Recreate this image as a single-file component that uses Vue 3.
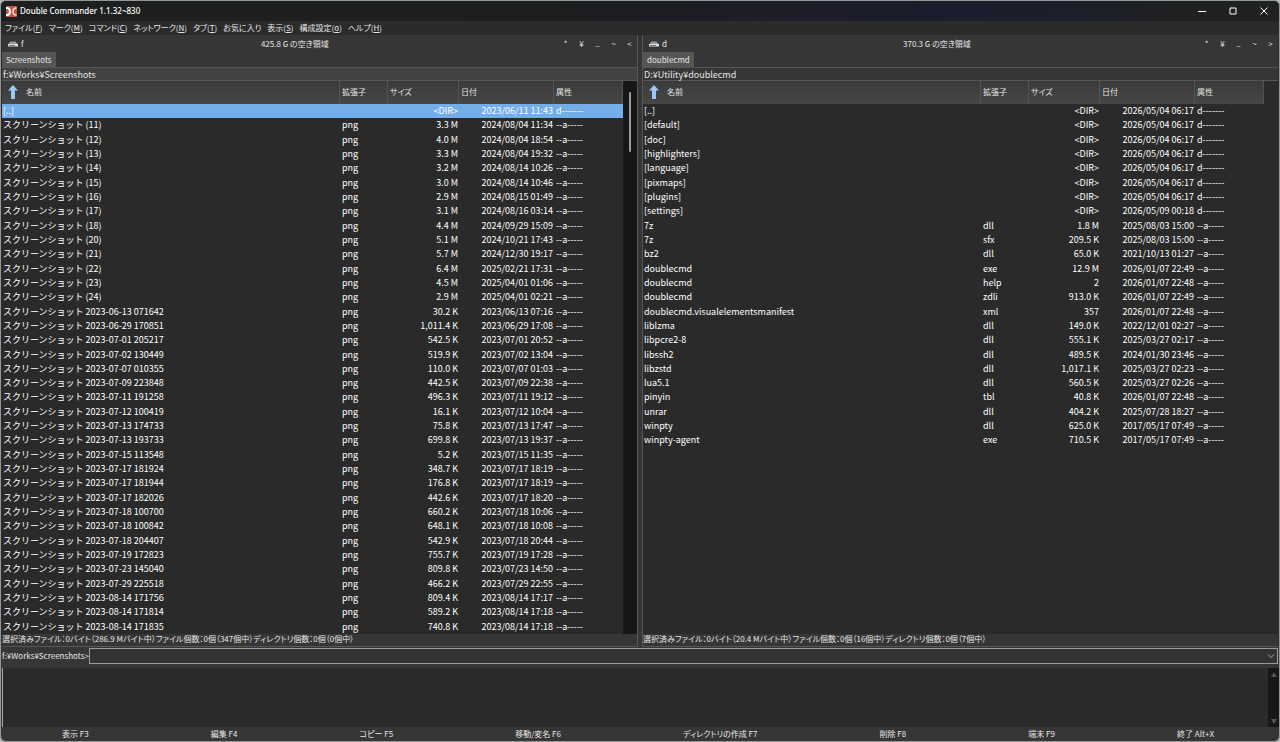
<script setup>
import { ref } from 'vue'

const menus = [
  ['ファイル', 'F'], ['マーク', 'M'], ['コマンド', 'C'], ['ネットワーク', 'N'], ['タブ', 'T'],
  ['お気に入り', ''], ['表示', 'S'], ['構成設定', 'o'], ['ヘルプ', 'H'],
]

const shots = `(11)|3.3 M|2024/08/04 11:34
(12)|4.0 M|2024/08/04 18:54
(13)|3.3 M|2024/08/04 19:32
(14)|3.2 M|2024/08/14 10:26
(15)|3.0 M|2024/08/14 10:46
(16)|2.9 M|2024/08/15 01:49
(17)|3.1 M|2024/08/16 03:14
(18)|4.4 M|2024/09/29 15:09
(20)|5.1 M|2024/10/21 17:43
(21)|5.7 M|2024/12/30 19:17
(22)|6.4 M|2025/02/21 17:31
(23)|4.5 M|2025/04/01 01:06
(24)|2.9 M|2025/04/01 02:21
2023-06-13 071642|30.2 K|2023/06/13 07:16
2023-06-29 170851|1,011.4 K|2023/06/29 17:08
2023-07-01 205217|542.5 K|2023/07/01 20:52
2023-07-02 130449|519.9 K|2023/07/02 13:04
2023-07-07 010355|110.0 K|2023/07/07 01:03
2023-07-09 223848|442.5 K|2023/07/09 22:38
2023-07-11 191258|496.3 K|2023/07/11 19:12
2023-07-12 100419|16.1 K|2023/07/12 10:04
2023-07-13 174733|75.8 K|2023/07/13 17:47
2023-07-13 193733|699.8 K|2023/07/13 19:37
2023-07-15 113548|5.2 K|2023/07/15 11:35
2023-07-17 181924|348.7 K|2023/07/17 18:19
2023-07-17 181944|176.8 K|2023/07/17 18:19
2023-07-17 182026|442.6 K|2023/07/17 18:20
2023-07-18 100700|660.2 K|2023/07/18 10:06
2023-07-18 100842|648.1 K|2023/07/18 10:08
2023-07-18 204407|542.9 K|2023/07/18 20:44
2023-07-19 172823|755.7 K|2023/07/19 17:28
2023-07-23 145040|809.8 K|2023/07/23 14:50
2023-07-29 225518|466.2 K|2023/07/29 22:55
2023-08-14 171756|809.4 K|2023/08/14 17:17
2023-08-14 171814|589.2 K|2023/08/14 17:18
2023-08-14 171835|740.8 K|2023/08/14 17:18`

const docs = `7z|dll|1.8 M|2025/08/03 15:00
7z|sfx|209.5 K|2025/08/03 15:00
bz2|dll|65.0 K|2021/10/13 01:27
doublecmd|exe|12.9 M|2026/01/07 22:49
doublecmd|help|2|2026/01/07 22:48
doublecmd|zdli|913.0 K|2026/01/07 22:49
doublecmd.visualelementsmanifest|xml|357|2026/01/07 22:48
liblzma|dll|149.0 K|2022/12/01 02:27
libpcre2-8|dll|555.1 K|2025/03/27 02:17
libssh2|dll|489.5 K|2024/01/30 23:46
libzstd|dll|1,017.1 K|2025/03/27 02:23
lua5.1|dll|560.5 K|2025/03/27 02:26
pinyin|tbl|40.8 K|2026/01/07 22:48
unrar|dll|404.2 K|2025/07/28 18:27
winpty|dll|625.0 K|2017/05/17 07:49
winpty-agent|exe|710.5 K|2017/05/17 07:49`

const dir = (name, date) => [`[${name}]`, '', '<DIR>', date, 'd-------']
const file = (name, ext, size, date) => [name, ext, size, date, '--a-----']

const panes = [
  {
    drive: 'f', free: '425.8 G の空き領域', other: '<', tab: 'Screenshots', path: 'f:¥Works¥Screenshots', active: true,
    rows: [
      dir('..', '2023/06/11 11:43'),
      ...shots.split('\n').map((line) => {
        const [n, size, date] = line.split('|')
        return file(`スクリーンショット ${n}`, 'png', size, date)
      }),
    ],
    status: '選択済みファイル：0バイト（286.9 Mバイト中）ファイル個数：0個（347個中）ディレクトリ個数：0個（0個中）',
  },
  {
    drive: 'd', free: '370.3 G の空き領域', other: '>', tab: 'doublecmd', path: 'D:¥Utility¥doublecmd', active: false,
    rows: [
      ...['..', 'default', 'doc', 'highlighters', 'language', 'pixmaps', 'plugins'].map((n) => dir(n, '2026/05/04 06:17')),
      dir('settings', '2026/05/09 00:18'),
      ...docs.split('\n').map((line) => file(...line.split('|'))),
    ],
    status: '選択済みファイル：0バイト（20.4 Mバイト中）ファイル個数：0個（16個中）ディレクトリ個数：0個（7個中）',
  },
]

const actions = ['表示 F3', '編集 F4', 'コピー F5', '移動/変名 F6', 'ディレクトリの作成 F7', '削除 F8', '端末 F9', '終了 Alt+X']
const command = ref('')
</script>

<template>
  <div class="window">
    <header class="titlebar">
      <svg class="logo" viewBox="0 0 22 22" aria-hidden="true">
        <rect width="22" height="22" rx="2" fill="#c9503f" />
        <path d="M0 4h3q5 1 5 7t-5 7H0" fill="none" stroke="#fff" stroke-width="4" />
        <path d="M21 4h-2q-5 1-5 7t5 7h2" fill="none" stroke="#f7d9d2" stroke-width="3" />
      </svg>
      <h1>Double Commander 1.1.32~830</h1>
      <button class="winbtn" aria-label="最小化"><svg viewBox="0 0 8 8"><path d="M0 4.5h8" /></svg></button>
      <button class="winbtn" aria-label="最大化"><svg viewBox="0 0 8 8"><path d="M1 1h6v6H1z" /></svg></button>
      <button class="winbtn" aria-label="閉じる"><svg viewBox="0 0 8 8"><path d="M.5.5l7 7M7.5.5l-7 7" /></svg></button>
    </header>

    <nav class="menubar">
      <button v-for="[label, key] in menus" :key="label">{{ label }}<template v-if="key">(<u>{{ key }}</u>)</template></button>
    </nav>

    <main class="panes">
      <section v-for="p in panes" :key="p.drive" class="pane">
        <div class="drivebar">
          <button class="drive">
            <svg viewBox="0 0 10 6" aria-hidden="true">
              <path d="M2.5.5h5L10 3.5H0z" fill="#9a9a9a" />
              <path d="M0 3h10v2.5H0z" fill="#dcdcdc" />
              <path d="M1 4.5h6" stroke="#777" />
            </svg>
            {{ p.drive }}
          </button>
          <span class="free">{{ p.free }}</span>
          <div class="jumps">
            <button>*</button><button>¥</button><button>..</button><button>~</button><button>{{ p.other }}</button>
          </div>
        </div>
        <div class="tabs"><button class="tab">{{ p.tab }}</button></div>
        <div class="path" :class="{ active: p.active }">{{ p.path }}</div>
        <div class="list">
          <table>
            <thead>
              <tr>
                <th class="namehead">
                  <svg viewBox="0 0 10 14" aria-hidden="true"><path d="M5 0l5 5.5H7V14H3V5.5H0z" fill="#9cc8f5" /></svg>
                  名前
                </th>
                <th>拡張子</th><th>サイズ</th><th>日付</th><th>属性</th>
              </tr>
            </thead>
            <tbody>
              <tr v-for="(r, i) in p.rows" :key="i" :class="{ selected: p.active && i === 0 }">
                <td v-for="(c, j) in r" :key="j">{{ c }}</td>
              </tr>
            </tbody>
          </table>
          <div class="scroll" :class="{ filled: p.active }"><span v-if="p.active" class="thumb"></span></div>
        </div>
        <div class="status">{{ p.status }}</div>
      </section>
    </main>

    <div class="commandline">
      <label for="cmd">f:¥Works¥Screenshots&gt;</label>
      <div class="combo">
        <input id="cmd" v-model="command" type="text" autocomplete="off" />
        <button aria-label="履歴"><svg viewBox="0 0 8 5"><path d="M1 .5l3 3 3-3" /></svg></button>
      </div>
    </div>

    <div class="console">
      <textarea readonly aria-label="コンソール"></textarea>
      <div class="rail">
        <svg viewBox="0 0 6 5" aria-hidden="true"><path d="M3 0l3 5H0z" /></svg>
        <svg viewBox="0 0 6 5" aria-hidden="true"><path d="M3 5l3-5H0z" /></svg>
      </div>
    </div>

    <footer class="actions">
      <button v-for="a in actions" :key="a">{{ a }}</button>
    </footer>
  </div>
</template>

<style>
html,
body,
#app {
  height: 100%;
}
body {
  margin: 0;
  background: #b4b8b8;
}
</style>

<style scoped>
* {
  box-sizing: border-box;
}
.window {
  display: flex;
  flex-direction: column;
  height: 100%;
  border: 1px solid #939797;
  border-radius: 6px;
  overflow: hidden;
  background: #363636;
  color: #e6e6e6;
  font: 8px/12px "Noto Sans CJK JP", sans-serif;
  font-feature-settings: "palt";
  white-space: nowrap;
}
button {
  padding: 0;
  border: 0;
  background: none;
  color: inherit;
  font: inherit;
  font-feature-settings: inherit;
}
svg {
  display: block;
}
.titlebar {
  display: flex;
  flex: none;
  align-items: center;
  height: 20px;
  padding-left: 5px;
  background: linear-gradient(90deg, #1d1f20 0%, #1d1e20 45%, #1c1d2c 72%, #1c1e2c 82%, #1f2122 92%);
}
.logo {
  width: 11px;
  height: 11px;
}
h1 {
  flex: 1;
  margin: 0 0 0 3px;
  font: 500 8px/12px "Noto Sans", sans-serif;
  color: #fff;
}
.winbtn {
  display: grid;
  place-items: center;
  width: 31px;
  height: 20px;
}
.winbtn svg {
  width: 8px;
  height: 8px;
  fill: none;
  stroke: #fff;
}
.menubar {
  display: flex;
  flex: none;
  gap: 6px;
  height: 14px;
  padding-left: 4px;
  background: #2b2b2b;
}
.panes {
  display: grid;
  flex: 1;
  grid-template-columns: 1fr 1fr;
  gap: 4px;
  min-height: 0;
}
.pane {
  display: flex;
  flex-direction: column;
  min-width: 0;
  border: 0 solid #565656;
  border-width: 0 1px 1px;
}
.pane:first-child {
  border-left-color: #2b2b2b;
}
.pane:last-child {
  border-right-color: #2b2b2b;
}
.drivebar {
  display: flex;
  flex: none;
  align-items: center;
  height: 17px;
  padding-left: 6px;
}
.drive {
  display: flex;
  align-items: center;
  gap: 3px;
}
.drive svg {
  width: 10px;
  height: 6px;
}
.free {
  flex: 1;
  padding-left: 8px;
  text-align: center;
}
.jumps {
  display: flex;
  gap: 1px;
}
.jumps button {
  width: 15px;
}
.tabs {
  display: flex;
  flex: none;
  height: 16px;
  border-bottom: 1px solid #565656;
}
.tab {
  padding: 0 4px;
  background: #555;
}
.path {
  flex: none;
  height: 13px;
  padding-left: 1px;
  border-bottom: 1px solid #565656;
  font-size: 9px;
  line-height: 14px;
}
.path.active {
  background: #424242;
}
.list {
  display: flex;
  flex: 1;
  min-height: 0;
  background: #2a2a2a;
}
table {
  display: flex;
  flex: 1;
  flex-direction: column;
  min-width: 0;
}
thead {
  display: block;
  flex: none;
}
tbody {
  display: grid;
  flex: 1;
  grid-template-rows: repeat(37, 1fr);
  min-height: 0;
  color: #fff;
  font: 9px/14px "Noto Sans CJK JP", sans-serif;
  font-feature-settings: normal;
}
tr {
  display: grid;
  grid-template-columns: minmax(0, 1fr) 48px 71px 95px 69px;
}
thead tr {
  height: 23px;
  background: linear-gradient(#3a3a3a, #474747);
}
th {
  display: flex;
  align-items: center;
  padding: 0 2px 2px;
  border-right: 1px solid #535353;
  font-weight: 400;
}
.namehead {
  gap: 8px;
  padding-left: 6px;
}
.namehead svg {
  width: 10px;
  height: 14px;
}
td {
  padding: 0 1px;
}
td:nth-child(2),
td:nth-child(5) {
  padding-left: 2px;
}
td:nth-child(3),
td:nth-child(4) {
  text-align: right;
}
.selected {
  background: #74aee8;
}
.scroll {
  width: 14px;
}
.scroll.filled {
  background: #171717;
}
.thumb {
  display: block;
  width: 2px;
  height: 60px;
  margin: 11px 0 0 6px;
  border-radius: 1px;
  background: #9b9b9b;
}
.status {
  flex: none;
  height: 12px;
  line-height: 10px;
}
.commandline {
  display: flex;
  flex: none;
  align-items: center;
  height: 21px;
  padding: 1px 1px 4px;
}
.combo {
  display: flex;
  flex: 1;
  height: 16px;
  border: 1px solid #9a9a9a;
  background: #333;
}
.combo input {
  flex: 1;
  min-width: 0;
  padding: 0 2px;
  border: 0;
  outline: 0;
  background: none;
  color: inherit;
  font: inherit;
}
.combo button {
  display: grid;
  place-items: center;
  width: 12px;
}
.combo svg {
  width: 8px;
  height: 5px;
  fill: none;
  stroke: #aaa;
}
.console {
  display: flex;
  flex: none;
  height: 59px;
  padding-left: 1px;
}
textarea {
  flex: 1;
  margin: 0;
  padding: 2px;
  border: 0;
  border-left: 1px solid #a5a5a5;
  outline: 0;
  background: #2a2a2a;
  color: inherit;
  font: inherit;
  resize: none;
}
.rail {
  display: flex;
  flex-direction: column;
  align-items: center;
  justify-content: space-between;
  width: 11px;
  padding: 4px 0 3px;
  background: #171717;
}
.rail svg {
  width: 6px;
  height: 5px;
  fill: #555;
}
.actions {
  display: flex;
  flex: none;
  height: 14px;
  padding-right: 4px;
}
.actions button {
  flex: 1 1 auto;
}
</style>
